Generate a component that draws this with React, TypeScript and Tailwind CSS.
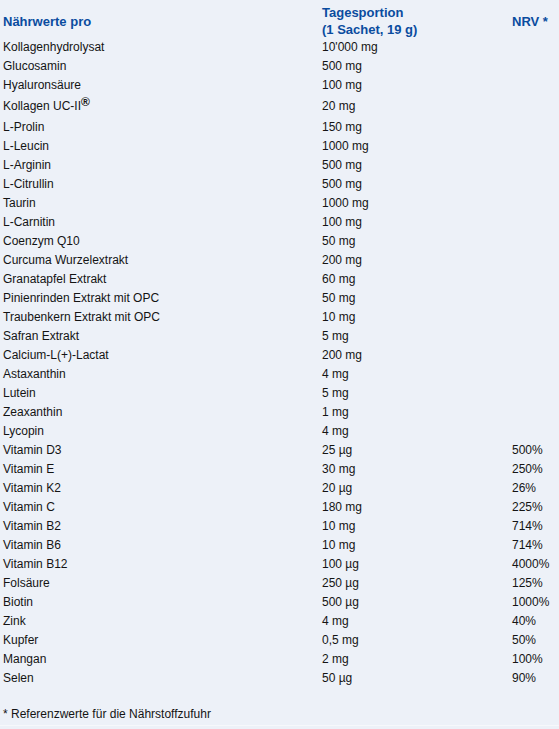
import React from "react";

type Row = { name: React.ReactNode; amount: string; nrv?: string; tall?: boolean };

const rows: Row[] = [
  { name: "Kollagenhydrolysat", amount: "10'000 mg" },
  { name: "Glucosamin", amount: "500 mg" },
  { name: "Hyaluronsäure", amount: "100 mg" },
  {
    name: (
      <>
        Kollagen UC-II<span className="text-[12px] font-bold relative top-[-4px] leading-none">®</span>
      </>
    ),
    amount: "20 mg",
    tall: true,
  },
  { name: "L-Prolin", amount: "150 mg" },
  { name: "L-Leucin", amount: "1000 mg" },
  { name: "L-Arginin", amount: "500 mg" },
  { name: "L-Citrullin", amount: "500 mg" },
  { name: "Taurin", amount: "1000 mg" },
  { name: "L-Carnitin", amount: "100 mg" },
  { name: "Coenzym Q10", amount: "50 mg" },
  { name: "Curcuma Wurzelextrakt", amount: "200 mg" },
  { name: "Granatapfel Extrakt", amount: "60 mg" },
  { name: "Pinienrinden Extrakt mit OPC", amount: "50 mg" },
  { name: "Traubenkern Extrakt mit OPC", amount: "10 mg" },
  { name: "Safran Extrakt", amount: "5 mg" },
  { name: "Calcium-L(+)-Lactat", amount: "200 mg" },
  { name: "Astaxanthin", amount: "4 mg" },
  { name: "Lutein", amount: "5 mg" },
  { name: "Zeaxanthin", amount: "1 mg" },
  { name: "Lycopin", amount: "4 mg" },
  { name: "Vitamin D3", amount: "25 µg", nrv: "500%" },
  { name: "Vitamin E", amount: "30 mg", nrv: "250%" },
  { name: "Vitamin K2", amount: "20 µg", nrv: "26%" },
  { name: "Vitamin C", amount: "180 mg", nrv: "225%" },
  { name: "Vitamin B2", amount: "10 mg", nrv: "714%" },
  { name: "Vitamin B6", amount: "10 mg", nrv: "714%" },
  { name: "Vitamin B12", amount: "100 µg", nrv: "4000%" },
  { name: "Folsäure", amount: "250 µg", nrv: "125%" },
  { name: "Biotin", amount: "500 µg", nrv: "1000%" },
  { name: "Zink", amount: "4 mg", nrv: "40%" },
  { name: "Kupfer", amount: "0,5 mg", nrv: "50%" },
  { name: "Mangan", amount: "2 mg", nrv: "100%" },
  { name: "Selen", amount: "50 µg", nrv: "90%" },
];

export default function App() {
  return (
    <div
      className="w-[559px] h-[729px] bg-[#edf1f8] text-[#141414] overflow-hidden"
      style={{ fontFamily: '"Liberation Sans", Arial, sans-serif' }}
    >
      <div className="grid grid-cols-[319px_190px_1fr] pl-[3px] pt-[4px] text-[13px] leading-[17px] font-bold text-[#0a4c9f]">
        <div className="flex items-center">Nährwerte pro</div>
        <div>
          <div>Tagesportion</div>
          <div>(1 Sachet, 19 g)</div>
        </div>
        <div className="flex items-center">NRV *</div>
      </div>
      <div className="pl-[3px] text-[12px]">
        {rows.map((r, i) => (
          <div
            key={i}
            className={`grid grid-cols-[319px_190px_1fr] items-center leading-[19px] ${
              r.tall ? "h-[23px]" : "h-[19px]"
            }`}
          >
            <div>{r.name}</div>
            <div>{r.amount}</div>
            <div>{r.nrv ?? ""}</div>
          </div>
        ))}
      </div>
      <div className="pl-[3px] pt-[17px] text-[12px] leading-[19px] h-[37px]">
        * Referenzwerte für die Nährstoffzufuhr
      </div>
      <div className="border-t border-[#f6f8fb] h-[6px]" />
    </div>
  );
}
